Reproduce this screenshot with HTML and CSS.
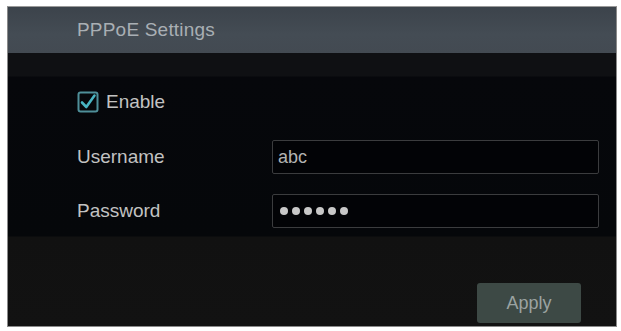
FILE: index.html
```html
<!DOCTYPE html>
<html>
<head>
<meta charset="utf-8">
<link rel="stylesheet" href="styles.css">
</head>
<body>
<div class="panel">
  <div class="header"><span class="title">PPPoE Settings</span></div>
  <div class="content">
    <div class="row enable-row">
      <span class="checkbox">
        <svg width="22" height="22" viewBox="0 0 22 22">
          <rect x="1.5" y="1.5" width="19" height="19" rx="2" fill="none" stroke="#4f8f99" stroke-width="2"/>
          <path d="M5 11.5 L9.3 16 L17.5 4.5" fill="none" stroke="#49b4c2" stroke-width="2.6" stroke-linecap="round" stroke-linejoin="round"/>
        </svg>
      </span>
      <span class="enable-label">Enable</span>
    </div>
    <div class="row field-row user-row">
      <span class="label">Username</span>
      <div class="input">abc</div>
    </div>
    <div class="row field-row pass-row">
      <span class="label">Password</span>
      <div class="input dots">
        <span class="dot"></span><span class="dot"></span><span class="dot"></span><span class="dot"></span><span class="dot"></span><span class="dot"></span>
      </div>
    </div>
    <div class="footer">
      <button class="apply">Apply</button>
    </div>
  </div>
</div>
</body>
</html>
```
FILE: styles.css
```css
html, body {
  margin: 0;
  padding: 0;
  background: #ffffff;
}
body {
  padding: 6px 4px 4px 7px;
  font-family: "Liberation Sans", Arial, sans-serif;
}
.panel {
  width: 610px;
  height: 321px;
  box-sizing: border-box;
  border: 1px solid #8a8a8a;
  border-top-color: #9a9a9a;
  display: flex;
  flex-direction: column;
  background: #111111;
  overflow: hidden;
}
.header {
  height: 46px;
  flex: none;
  background: linear-gradient(#3c434b, #444c54 60%, #434a52);
  display: flex;
  align-items: center;
  padding-left: 69px;
}
.title {
  color: #a9afb4;
  font-size: 19px;
  letter-spacing: 0.2px;
}
.content {
  flex: 1;
  display: flex;
  flex-direction: column;
  padding: 35px 17px 3px 69px;
  background: linear-gradient(#0f1013 0, #0f1013 23px, #06070b 24px, #05070a 183px, #111111 184px, #121212 100%);
}
.row {
  display: flex;
  align-items: center;
}
.enable-row {
  height: 28px;
}
.checkbox {
  width: 22px;
  height: 22px;
  display: flex;
  margin-right: 7px;
}
.enable-label, .label {
  color: #c2c2c2;
  font-size: 19px;
}
.field-row {
  height: 34px;
}
.user-row {
  margin-top: 24px;
}
.pass-row {
  margin-top: 20px;
}
.label {
  width: 195px;
  flex: none;
}
.input {
  width: 327px;
  height: 34px;
  box-sizing: border-box;
  border: 1.5px solid #3b3c3e;
  border-radius: 2px;
  background: #020306;
  color: #b3b3b3;
  font-size: 18px;
  display: flex;
  align-items: center;
  padding-left: 5px;
}
.dots {
  gap: 4px;
  padding-left: 7px;
}
.dot {
  width: 8px;
  height: 8px;
  border-radius: 50%;
  background: #c8c8c8;
}
.footer {
  margin-top: auto;
  display: flex;
  justify-content: flex-end;
  padding-right: 18px;
}
.apply {
  width: 104px;
  height: 40px;
  border: none;
  border-radius: 3px;
  background: #3d4945;
  color: #9ba3a1;
  font-family: "Liberation Sans", Arial, sans-serif;
  font-size: 18px;
  padding: 0;
}
```
